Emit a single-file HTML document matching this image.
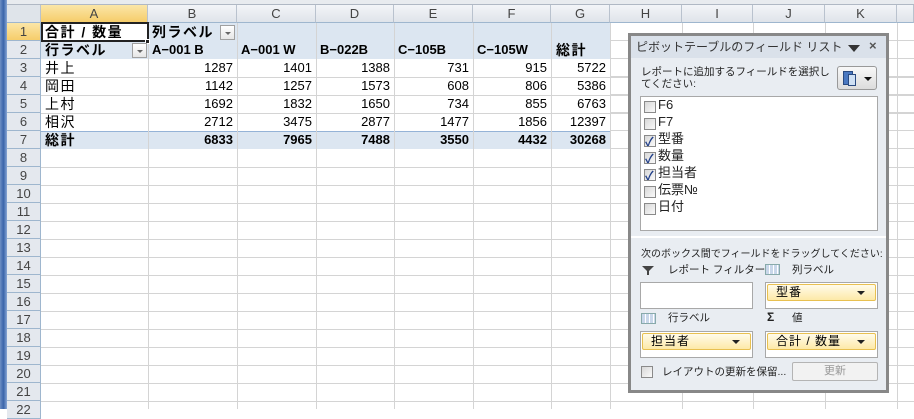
<!DOCTYPE html>
<html><head><meta charset="utf-8"><style>
body{margin:0;width:914px;height:409px;overflow:hidden;background:#fff;font-family:"Liberation Sans","Noto Sans CJK JP",sans-serif;position:relative}
div{box-sizing:border-box}
.a{position:absolute}
.vl{position:absolute;top:5px;height:404px;width:1px;background:#d4d4d4}
.hl{position:absolute;left:41px;width:873px;height:1px;background:#d4d4d4}
.ch{position:absolute;top:5px;height:18px;font-size:13px;color:#444;text-align:center;line-height:18px;border-right:1px solid #b9c2ce;border-bottom:1px solid #9eb6ce;background:linear-gradient(#f3f5f8,#dfe4ea)}
.rh{position:absolute;left:7px;width:34px;height:18px;font-size:13px;color:#444;text-align:center;line-height:18px;background:#e4e8ee;border-bottom:1px solid #9eb6ce;border-right:1px solid #9eb6ce}
.t{position:absolute;font-size:13px;line-height:18px;color:#000;white-space:nowrap}
.j{font-size:14px;letter-spacing:1.5px}
.r{text-align:right}
.b{font-weight:bold}
.dd{position:absolute;width:15px;height:15px;border:1px solid #a0a0a0;background:linear-gradient(#fff,#e6e6e6)}
.dd:after{content:"";position:absolute;left:4px;top:6px;border-left:3px solid transparent;border-right:3px solid transparent;border-top:3px solid #666}
.p{position:absolute;font-size:10.5px;color:#222;white-space:nowrap;line-height:13px}
.cb{position:absolute;width:12px;height:12px;border:1px solid #8a8a8a;background:linear-gradient(135deg,#d8d8d8,#fafafa)}
.ck:after{content:"✓";position:absolute;left:0;top:-3px;font-size:12px;color:#22408a;font-weight:bold}
.box{position:absolute;background:#fff;border:1px solid #a8a8a8}
.yb{position:absolute;border:1px solid #e8c050;border-radius:2px;background:linear-gradient(#fffbea,#fde9a8);font-size:12px;line-height:15px;padding-left:8px;letter-spacing:1px}
.yb:after{content:"";position:absolute;right:10px;top:6px;border-left:4px solid transparent;border-right:4px solid transparent;border-top:4px solid #222}
</style></head><body>
<div class="a" style="left:0;top:0;width:914px;height:5px;background:#e8ebef;border-bottom:1px solid #b0b8c4"></div>
<div class="a" style="left:0;top:0;width:7px;height:409px;background:linear-gradient(90deg,#6d8fc4,#3a64aa,#88a6d4)"></div>
<div class="a" style="left:148px;top:23px;width:462px;height:36px;background:#dce6f1"></div>
<div class="a" style="left:41px;top:41px;width:107px;height:18px;background:#dce6f1"></div>
<div class="a" style="left:41px;top:131px;width:569px;height:18px;background:#dce6f1;border-top:1px solid #95b3d7"></div>
<div class="vl" style="left:148px"></div><div class="vl" style="left:237px"></div><div class="vl" style="left:316px"></div><div class="vl" style="left:394px"></div><div class="vl" style="left:473px"></div><div class="vl" style="left:551px"></div><div class="vl" style="left:610px"></div><div class="vl" style="left:682px"></div><div class="vl" style="left:753px"></div><div class="vl" style="left:825px"></div><div class="vl" style="left:897px"></div>
<div class="hl" style="top:77px"></div><div class="hl" style="top:95px"></div><div class="hl" style="top:113px"></div>
<div class="hl" style="top:167px"></div><div class="hl" style="top:185px"></div><div class="hl" style="top:203px"></div><div class="hl" style="top:221px"></div><div class="hl" style="top:239px"></div><div class="hl" style="top:257px"></div><div class="hl" style="top:275px"></div><div class="hl" style="top:293px"></div><div class="hl" style="top:311px"></div><div class="hl" style="top:329px"></div><div class="hl" style="top:347px"></div><div class="hl" style="top:365px"></div><div class="hl" style="top:383px"></div><div class="hl" style="top:401px"></div>
<div class="hl" style="top:40px;left:610px;width:304px"></div><div class="hl" style="top:58px;left:610px;width:304px"></div><div class="hl" style="top:76px;left:610px;width:304px"></div><div class="hl" style="top:94px;left:610px;width:304px"></div><div class="hl" style="top:112px;left:610px;width:304px"></div><div class="hl" style="top:130px;left:610px;width:304px"></div><div class="hl" style="top:148px;left:610px;width:304px"></div>
<div class="ch" style="left:7px;width:34px;background:#dfe4ea"></div>
<div class="ch" style="left:41px;width:107px;background:linear-gradient(#fbe6a8,#f6cd6a);border-bottom:1px solid #e3a83a">A</div>
<div class="ch" style="left:148px;width:89px">B</div><div class="ch" style="left:237px;width:79px">C</div><div class="ch" style="left:316px;width:78px">D</div><div class="ch" style="left:394px;width:79px">E</div><div class="ch" style="left:473px;width:78px">F</div><div class="ch" style="left:551px;width:59px">G</div><div class="ch" style="left:610px;width:72px">H</div><div class="ch" style="left:682px;width:71px">I</div><div class="ch" style="left:753px;width:72px">J</div><div class="ch" style="left:825px;width:72px">K</div><div class="ch" style="left:897px;width:17px"></div>
<div class="rh" style="top:23px;background:linear-gradient(#fbe6a8,#f6cd6a)">1</div>
<div class="rh" style="top:41px">2</div><div class="rh" style="top:59px">3</div><div class="rh" style="top:77px">4</div><div class="rh" style="top:95px">5</div><div class="rh" style="top:113px">6</div><div class="rh" style="top:131px">7</div><div class="rh" style="top:149px">8</div><div class="rh" style="top:167px">9</div><div class="rh" style="top:185px">10</div><div class="rh" style="top:203px">11</div><div class="rh" style="top:221px">12</div><div class="rh" style="top:239px">13</div><div class="rh" style="top:257px">14</div><div class="rh" style="top:275px">15</div><div class="rh" style="top:293px">16</div><div class="rh" style="top:311px">17</div><div class="rh" style="top:329px">18</div><div class="rh" style="top:347px">19</div><div class="rh" style="top:365px">20</div><div class="rh" style="top:383px">21</div><div class="rh" style="top:401px">22</div>
<div class="a" style="left:41px;top:22px;width:108px;height:20px;border:2px solid #222"></div>
<div class="a" style="left:145px;top:39px;width:5px;height:5px;background:#222;border:1px solid #fff"></div>
<div class="t b j" style="left:45px;top:23px">合計 / 数量</div>
<div class="t b j" style="left:152px;top:23px">列ラベル</div><div class="dd" style="left:220px;top:25px"></div>
<div class="t b j" style="left:45px;top:41px">行ラベル</div><div class="dd" style="left:132px;top:43px"></div>
<div class="t b" style="left:152px;top:41px">A−001 B</div><div class="t b" style="left:241px;top:41px">A−001 W</div><div class="t b" style="left:320px;top:41px">B−022B</div><div class="t b" style="left:398px;top:41px">C−105B</div><div class="t b" style="left:477px;top:41px">C−105W</div><div class="t b j" style="left:556px;top:41px">総計</div>
<div class="t j" style="left:45px;top:59px">井上</div><div class="t j" style="left:45px;top:77px">岡田</div><div class="t j" style="left:45px;top:95px">上村</div><div class="t j" style="left:45px;top:113px">相沢</div><div class="t b j" style="left:45px;top:131px">総計</div>
<div class="t r" style="right:681px;top:59px">1287</div><div class="t r" style="right:602px;top:59px">1401</div><div class="t r" style="right:524px;top:59px">1388</div><div class="t r" style="right:445px;top:59px">731</div><div class="t r" style="right:367px;top:59px">915</div><div class="t r" style="right:308px;top:59px">5722</div>
<div class="t r" style="right:681px;top:77px">1142</div><div class="t r" style="right:602px;top:77px">1257</div><div class="t r" style="right:524px;top:77px">1573</div><div class="t r" style="right:445px;top:77px">608</div><div class="t r" style="right:367px;top:77px">806</div><div class="t r" style="right:308px;top:77px">5386</div>
<div class="t r" style="right:681px;top:95px">1692</div><div class="t r" style="right:602px;top:95px">1832</div><div class="t r" style="right:524px;top:95px">1650</div><div class="t r" style="right:445px;top:95px">734</div><div class="t r" style="right:367px;top:95px">855</div><div class="t r" style="right:308px;top:95px">6763</div>
<div class="t r" style="right:681px;top:113px">2712</div><div class="t r" style="right:602px;top:113px">3475</div><div class="t r" style="right:524px;top:113px">2877</div><div class="t r" style="right:445px;top:113px">1477</div><div class="t r" style="right:367px;top:113px">1856</div><div class="t r" style="right:308px;top:113px">12397</div>
<div class="t r b" style="right:681px;top:131px">6833</div><div class="t r b" style="right:602px;top:131px">7965</div><div class="t r b" style="right:524px;top:131px">7488</div><div class="t r b" style="right:445px;top:131px">3550</div><div class="t r b" style="right:367px;top:131px">4432</div><div class="t r b" style="right:308px;top:131px">30268</div>
<div class="a" style="left:628px;top:33px;width:261px;height:360px;border:3px solid #888;background:#e9edf2"></div>
<div class="a" style="left:631px;top:36px;width:255px;height:22px;background:#dae1ea"></div>
<div class="p" style="left:636px;top:40px;font-size:12px;line-height:14px;color:#333">ピボットテーブルのフィールド リスト</div>
<div class="a" style="left:848px;top:45px;border-left:6px solid transparent;border-right:6px solid transparent;border-top:7px solid #333"></div>
<div class="p" style="left:869px;top:39px;font-size:13px;font-weight:bold;color:#555">×</div>
<div class="p" style="left:641px;top:66px">レポートに追加するフィールドを選択し</div>
<div class="p" style="left:641px;top:78px">てください:</div>
<div class="a" style="left:837px;top:66px;width:40px;height:24px;border:1px solid #999;border-radius:3px;background:linear-gradient(#f8f8f8,#dcdcdc)"></div>
<div class="a" style="left:843px;top:71px;width:10px;height:14px;background:#4a78c0;border:1px solid #2a4a80"></div>
<div class="a" style="left:848px;top:74px;width:8px;height:12px;background:#cfe0f4;border:1px solid #2a4a80"></div>
<div class="a" style="left:864px;top:77px;border-left:4px solid transparent;border-right:4px solid transparent;border-top:4px solid #111"></div>
<div class="box" style="left:640px;top:96px;width:238px;height:135px"></div>
<div class="cb" style="left:644px;top:101px"></div><div class="p" style="left:658px;top:97px;font-size:13px;line-height:16px">F6</div>
<div class="cb" style="left:644px;top:118px"></div><div class="p" style="left:658px;top:114px;font-size:13px;line-height:16px">F7</div>
<div class="cb ck" style="left:644px;top:135px"></div><div class="p" style="left:658px;top:131px;font-size:13px;line-height:16px">型番</div>
<div class="cb ck" style="left:644px;top:152px"></div><div class="p" style="left:658px;top:148px;font-size:13px;line-height:16px">数量</div>
<div class="cb ck" style="left:644px;top:169px"></div><div class="p" style="left:658px;top:165px;font-size:13px;line-height:16px">担当者</div>
<div class="cb" style="left:644px;top:186px"></div><div class="p" style="left:658px;top:182px;font-size:13px;line-height:16px">伝票№</div>
<div class="cb" style="left:644px;top:203px"></div><div class="p" style="left:658px;top:199px;font-size:13px;line-height:16px">日付</div>
<div class="a" style="left:631px;top:236px;width:255px;height:2px;background:#fff"></div>
<div class="p" style="left:641px;top:248px;font-size:10px">次のボックス間でフィールドをドラッグしてください:</div>
<div class="a" style="left:642px;top:266px;border-left:6px solid transparent;border-right:6px solid transparent;border-top:6px solid #444"></div>
<div class="a" style="left:647px;top:270px;width:2px;height:5px;background:#444"></div>
<div class="p" style="left:668px;top:264px">レポート フィルター</div>
<div class="a" style="left:765px;top:264px;width:15px;height:11px;border:1px solid #8aa;background:repeating-linear-gradient(90deg,#c9d7ea 0 3px,#fff 3px 4px)"></div>
<div class="p" style="left:792px;top:264px">列ラベル</div>
<div class="box" style="left:640px;top:282px;width:113px;height:27px"></div>
<div class="box" style="left:765px;top:282px;width:113px;height:27px"></div>
<div class="yb" style="left:767px;top:284px;width:109px;height:17px">型番</div>
<div class="a" style="left:641px;top:313px;width:15px;height:11px;border:1px solid #8aa;background:repeating-linear-gradient(90deg,#c9d7ea 0 3px,#fff 3px 4px)"></div>
<div class="p" style="left:668px;top:312px">行ラベル</div>
<div class="p" style="left:767px;top:311px;font-weight:bold;font-size:12px">Σ</div>
<div class="p" style="left:792px;top:312px">値</div>
<div class="box" style="left:640px;top:331px;width:113px;height:27px"></div>
<div class="box" style="left:765px;top:331px;width:113px;height:27px"></div>
<div class="yb" style="left:642px;top:333px;width:109px;height:17px">担当者</div>
<div class="yb" style="left:767px;top:333px;width:109px;height:17px">合計 / 数量</div>
<div class="cb" style="left:641px;top:366px"></div>
<div class="p" style="left:662px;top:366px">レイアウトの更新を保留...</div>
<div class="a" style="left:792px;top:362px;width:86px;height:19px;border:1px solid #b4b4b4;border-radius:2px;background:#f2f2f2;color:#999;font-size:11px;text-align:center;line-height:17px">更新</div>
</body></html>
